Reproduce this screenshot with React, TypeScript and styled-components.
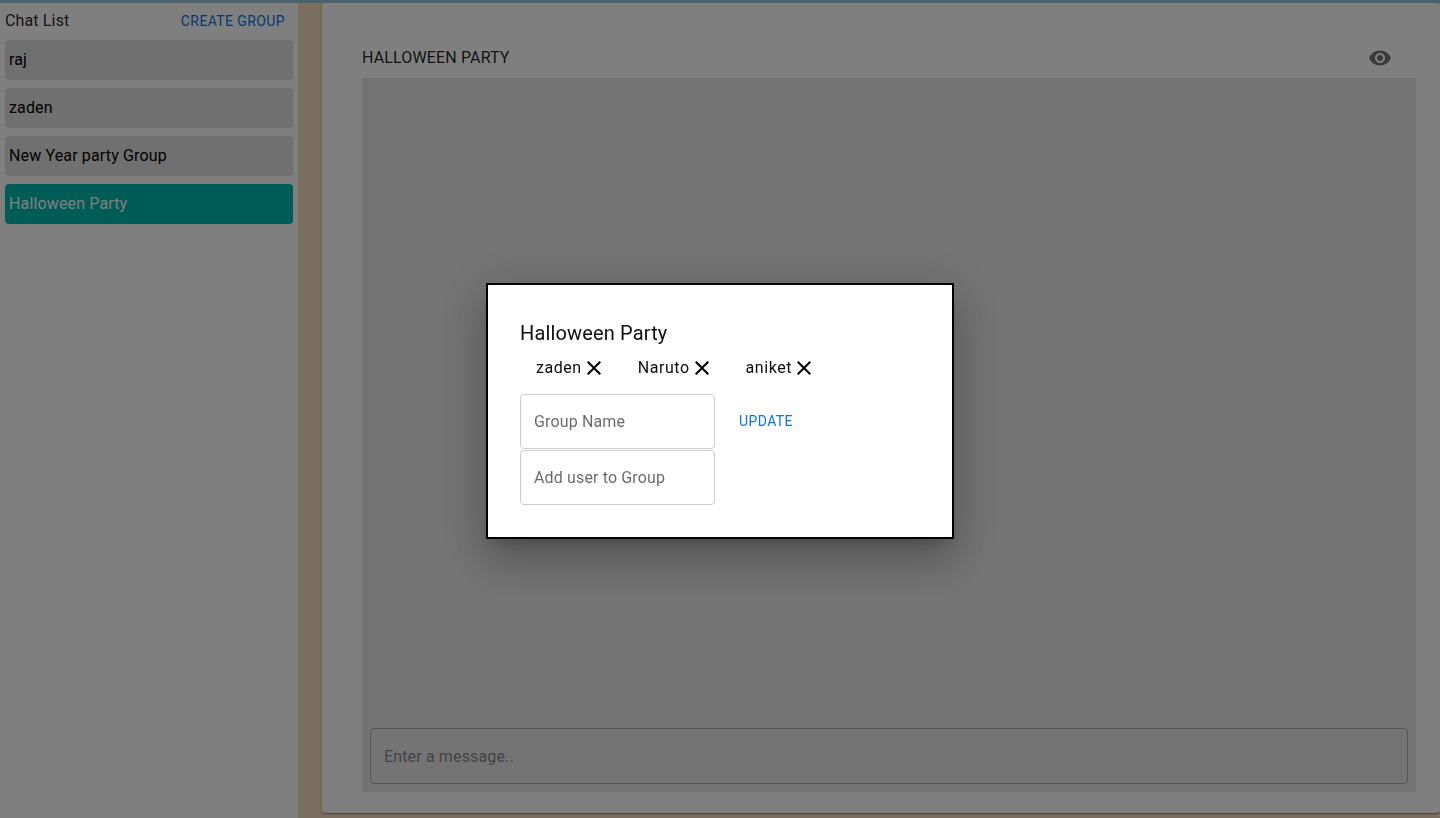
import React from "react";
import styled, { createGlobalStyle } from "styled-components";

const Global = createGlobalStyle`
  html, body { margin: 0; padding: 0; height: 100%; overflow: hidden; }
  body { font-family: Roboto, "Liberation Sans", sans-serif; background: #fff; color: rgba(0,0,0,0.87); }
  #root { height: 100%; }
`;

const Page = styled.div`
  display: flex;
  flex-direction: column;
  width: 1440px;
  height: 818px;
  background: #fff;
`;
const TopStrip = styled.div`
  height: 3px;
  flex: none;
  background: #9bc4d8;
`;
const Body = styled.div`
  display: flex;
  flex: 1;
  min-height: 0;
  background: #f5dcbc;
`;
const Sidebar = styled.aside`
  width: 298px;
  flex: none;
  background: #fff;
  padding: 5px 5px 0;
  box-sizing: border-box;
`;
const SideHead = styled.div`
  display: flex;
  align-items: center;
  justify-content: space-between;
  height: 26px;
  margin-bottom: 6px;
`;
const SideTitle = styled.span`
  font-size: 16px;
  letter-spacing: 0.009em;
  padding-bottom: 2px;
`;
const TextButton = styled.button<{ $color: string; $pad?: number; $lift?: number }>`
  border: 0;
  background: none;
  font-family: inherit;
  font-size: 14px;
  font-weight: 400;
  letter-spacing: 0.028em;
  text-transform: uppercase;
  color: ${(p) => p.$color};
  padding: 0 ${(p) => p.$pad ?? 0}px ${(p) => p.$lift ?? 0}px;
`;
const ChatItem = styled.div<{ $active?: boolean }>`
  width: 288px;
  height: 40px;
  box-sizing: border-box;
  display: flex;
  align-items: center;
  padding: 0 0 2px 4px;
  margin-bottom: 8px;
  border-radius: 4px;
  font-size: 16px;
  letter-spacing: 0.009em;
  background: ${(p) => (p.$active ? "#00b8ae" : "#e0e0e0")};
  color: ${(p) => (p.$active ? "#fff" : "#000")};
`;
const Gutter = styled.div`
  width: 24px;
  flex: none;
`;
const Panel = styled.main`
  flex: 1;
  height: 810px;
  box-sizing: border-box;
  padding: 40px 24px 21px 40px;
  background: #fff;
  border-radius: 4px;
  box-shadow: 0 2px 1px -1px rgba(0,0,0,.2), 0 1px 1px 0 rgba(0,0,0,.14), 0 1px 3px 0 rgba(0,0,0,.12);
  display: flex;
  flex-direction: column;
`;
const PanelHead = styled.div`
  display: flex;
  align-items: center;
  justify-content: space-between;
  height: 35px;
  box-sizing: border-box;
  padding: 0 24px 6px 0;
`;
const PanelTitle = styled.h2`
  margin: 0;
  font-size: 16px;
  font-weight: 400;
  letter-spacing: 0.009em;
  text-transform: uppercase;
`;
const EyeIcon = styled.svg`
  width: 24px;
  height: 24px;
  fill: rgba(0,0,0,0.54);
  display: block;
`;
const Conversation = styled.section`
  flex: 1;
  background: #e8e8e8;
  padding: 8px;
  display: flex;
  flex-direction: column;
  justify-content: flex-end;
`;
const MessageBox = styled.div`
  height: 56px;
  box-sizing: border-box;
  border: 1px solid rgba(0,0,0,0.26);
  border-radius: 4px;
  display: flex;
  align-items: center;
  padding-left: 13px;
  font-size: 16px;
  letter-spacing: 0.009em;
  color: rgba(0,0,0,0.45);
`;
const Backdrop = styled.div`
  position: fixed;
  inset: 0;
  background: rgba(0,0,0,0.5);
`;
const Modal = styled.div`
  position: absolute;
  left: 486px;
  top: 283px;
  width: 468px;
  height: 256px;
  box-sizing: border-box;
  padding: 32px;
  background: #fff;
  border: 2px solid #000;
  box-shadow: 0 11px 15px -7px rgba(0,0,0,.2), 0 24px 38px 3px rgba(0,0,0,.14), 0 9px 46px 8px rgba(0,0,0,.12);
  color: #000;
`;
const ModalTitle = styled.h2`
  margin: 0;
  font-size: 20px;
  line-height: 32px;
  font-weight: 400;
  letter-spacing: 0.0075em;
  color: rgba(0,0,0,0.95);
`;
const Chips = styled.div`
  display: flex;
  height: 32px;
  margin-top: 2px;
  margin-bottom: 11px;
`;
const Chip = styled.div`
  display: flex;
  align-items: center;
  gap: 4px;
  margin-left: 16px;
  margin-right: 20px;
  font-size: 16px;
  letter-spacing: 0.55px;
  color: rgba(0,0,0,0.95);
`;
const ChipClose = styled.svg`
  display: block;
  margin: 1px -4px 0;
  width: 24px;
  height: 24px;
  fill: #000;
`;
const FormRow = styled.div`
  display: flex;
  align-items: center;
  margin-bottom: 1px;
`;
const Field = styled.div`
  width: 195px;
  height: 55px;
  box-sizing: border-box;
  border: 1px solid rgba(0,0,0,0.2);
  border-radius: 4px;
  display: flex;
  align-items: center;
  padding-left: 13px;
  font-size: 16px;
  letter-spacing: 0.009em;
  color: rgba(0,0,0,0.6);
`;

const Close = () => (
  <ChipClose viewBox="0 0 24 24">
    <path d="M19 6.41 17.59 5 12 10.59 6.41 5 5 6.41 10.59 12 5 17.59 6.41 19 12 13.41 17.59 19 19 17.59 13.41 12z" />
  </ChipClose>
);

const chats = ["raj", "zaden", "New Year party Group"];

export default function App() {
  return (
    <>
      <Global />
      <Page>
        <TopStrip />
        <Body>
          <Sidebar>
            <SideHead>
              <SideTitle>Chat List</SideTitle>
              <TextButton $color="#0a74da" $pad={8}>Create Group</TextButton>
            </SideHead>
            {chats.map((c) => (
              <ChatItem key={c}>{c}</ChatItem>
            ))}
            <ChatItem $active>Halloween Party</ChatItem>
          </Sidebar>
          <Gutter />
          <Panel>
            <PanelHead>
              <PanelTitle>Halloween Party</PanelTitle>
              <EyeIcon viewBox="0 0 24 24">
                <path d="M12 4.5C7 4.5 2.73 7.61 1 12c1.73 4.39 6 7.5 11 7.5s9.27-3.11 11-7.5c-1.73-4.39-6-7.5-11-7.5zM12 17c-2.76 0-5-2.24-5-5s2.24-5 5-5 5 2.24 5 5-2.24 5-5 5zm0-8c-1.66 0-3 1.34-3 3s1.34 3 3 3 3-1.34 3-3-1.34-3-3-3z" />
              </EyeIcon>
            </PanelHead>
            <Conversation>
              <MessageBox>Enter a message..</MessageBox>
            </Conversation>
          </Panel>
        </Body>
      </Page>
      <Backdrop>
        <Modal>
          <ModalTitle>Halloween Party</ModalTitle>
          <Chips>
            <Chip>zaden <Close /></Chip>
            <Chip>Naruto <Close /></Chip>
            <Chip>aniket <Close /></Chip>
          </Chips>
          <FormRow>
            <Field>Group Name</Field>
            <TextButton $color="#0a74da" $pad={24} $lift={2}>Update</TextButton>
          </FormRow>
          <Field>Add user to Group</Field>
        </Modal>
      </Backdrop>
    </>
  );
}
